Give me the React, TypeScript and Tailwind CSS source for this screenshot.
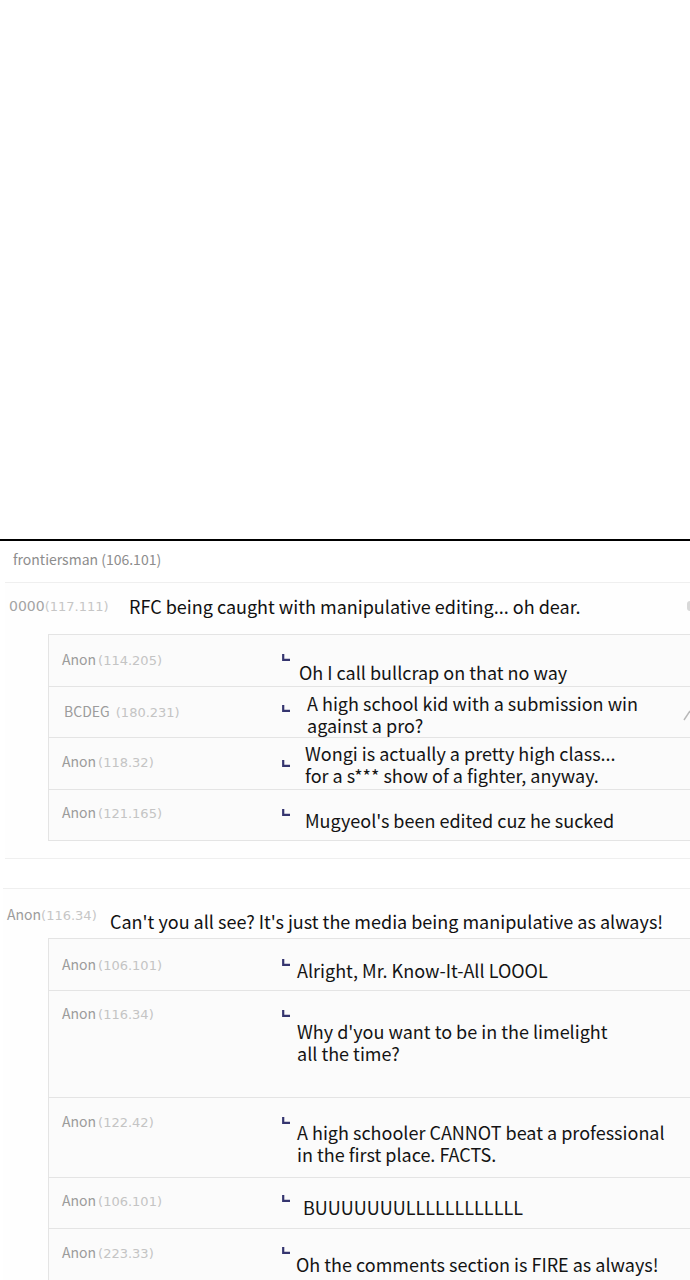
type Reply = {
  name: string;
  ip: string;
  lines: string[];
  height: number;
  textLeft: number;
  textTop: number;
  arrowTop: number;
  nameTop: number;
  nameLeft?: number;
};

const FONT = { fontFamily: '"Noto Sans CJK KR", "Noto Sans", sans-serif' };
const IP_FONT = { fontFamily: '"DejaVu Sans", Verdana, sans-serif' };

function ReplyMark() {
  return (
    <svg width="8" height="7" viewBox="0 0 8 7" className="block">
      <path d="M1.2 0 V5.8 H8" fill="none" stroke="#35356f" strokeWidth="2.2" />
    </svg>
  );
}

function ReplyRow({ r }: { r: Reply }) {
  return (
    <div
      className="relative flex border-b border-[#e4e4e4] bg-[#fbfbfb]"
      style={{ height: r.height }}
    >
      <div className="w-[233px] shrink-0 leading-[20px]" style={{ paddingTop: r.nameTop, paddingLeft: r.nameLeft ?? 13 }}>
        <span className="text-[14px] text-[#9c9c9c]">{r.name}</span>
        <span className="ml-[2px] text-[13px] text-[#c4c4c4]" style={IP_FONT}>
          {r.ip}
        </span>
      </div>
      <div className="w-[8px] shrink-0" style={{ paddingTop: r.arrowTop }}>
        <ReplyMark />
      </div>
      <div style={{ paddingTop: r.textTop, marginLeft: r.textLeft }}>
        {r.lines.map((l) => (
          <div key={l} className="h-[22px] whitespace-nowrap text-[18px] leading-[22px] text-[#141414]">
            {l}
          </div>
        ))}
      </div>
    </div>
  );
}

const thread1: Reply[] = [
  { name: 'Anon', ip: '(114.205)', lines: ['Oh I call bullcrap on that no way'], height: 52, textLeft: 9, textTop: 26, arrowTop: 19, nameTop: 13 },
  { name: 'BCDEG', ip: ' (180.231)', lines: ['A high school kid with a submission win', 'against a pro?'], height: 51, textLeft: 17, textTop: 5, arrowTop: 18, nameTop: 13, nameLeft: 15 },
  { name: 'Anon', ip: '(118.32)', lines: ['Wongi is actually a pretty high class...', 'for a s*** show of a fighter, anyway.'], height: 52, textLeft: 15, textTop: 4, arrowTop: 22, nameTop: 12 },
  { name: 'Anon', ip: '(121.165)', lines: ["Mugyeol's been edited cuz he sucked"], height: 51, textLeft: 15, textTop: 19, arrowTop: 19, nameTop: 11 },
];

const thread2: Reply[] = [
  { name: 'Anon', ip: '(106.101)', lines: ['Alright, Mr. Know-It-All LOOOL'], height: 52, textLeft: 7, textTop: 20, arrowTop: 20, nameTop: 14 },
  { name: 'Anon', ip: '(116.34)', lines: ["Why d'you want to be in the limelight", 'all the time?'], height: 107, textLeft: 7, textTop: 29, arrowTop: 19, nameTop: 11 },
  { name: 'Anon', ip: '(122.42)', lines: ['A high schooler CANNOT beat a professional', 'in the first place. FACTS.'], height: 80, textLeft: 7, textTop: 23, arrowTop: 19, nameTop: 12 },
  { name: 'Anon', ip: '(106.101)', lines: ['BUUUUUUULLLLLLLLLLLL'], height: 51, textLeft: 13, textTop: 18, arrowTop: 17, nameTop: 11 },
  { name: 'Anon', ip: '(223.33)', lines: ['Oh the comments section is FIRE as always!'], height: 60, textLeft: 6, textTop: 24, arrowTop: 18, nameTop: 12 },
];

export default function App() {
  return (
    <div className="relative h-[1280px] w-[690px] overflow-hidden bg-white" style={FONT}>
      <div className="h-[539px]" />
      <div className="h-[2px] bg-black" />

      <div className="h-[41px] pl-[13px] pt-[5px]">
        <span className="text-[14px] leading-[20px] text-[#8d8d8d]">frontiersman (106.101)</span>
      </div>

      {/* first comment and its replies */}
      <div className="ml-[5px] border-t border-b border-[#efefef] bg-[#fefefe] pb-[17px]">
        <div className="relative flex h-[51px]">
          <div className="w-[124px] shrink-0 pl-[4px] pt-[13px] leading-[20px]" style={IP_FONT}>
            <span className="text-[14px] text-[#a4a4a4]">0000</span>
            <span className="text-[13px] text-[#c6c6c6]">(117.111)</span>
          </div>
          <div className="pt-[11px] text-[18px] leading-[24px] whitespace-nowrap text-[#111]">
            RFC being caught with manipulative editing... oh dear.
          </div>
          <div className="absolute right-0 top-[18px] h-[10px] w-[3px] rounded-l-full bg-[#d8d8d8]" />
        </div>
        <div className="ml-[43px] w-[700px] border-t border-l border-[#e4e4e4]">
          {thread1.map((r, i) => (
            <div key={i} className="relative">
              <ReplyRow r={r} />
              {i === 1 && (
                <svg width="8" height="12" viewBox="0 0 8 12" className="absolute left-[634px] top-[22px]">
                  <path d="M1 11 L7 2" stroke="#b8b8b8" strokeWidth="1.5" />
                </svg>
              )}
            </div>
          ))}
        </div>
      </div>

      <div className="h-[29px]" />

      {/* second comment and its replies */}
      <div className="ml-[3px] border-t border-[#efefef] bg-[#fefefe]">
        <div className="flex h-[49px]">
          <div className="w-[107px] shrink-0 pl-[4px] pt-[14px] leading-[20px]">
            <span className="text-[14px] text-[#9c9c9c]">Anon</span>
            <span className="text-[13px] text-[#c6c6c6]" style={IP_FONT}>
              (116.34)
            </span>
          </div>
          <div className="pt-[20px] text-[18px] leading-[24px] whitespace-nowrap text-[#111]">
            Can't you all see? It's just the media being manipulative as always!
          </div>
        </div>
        <div className="ml-[45px] w-[700px] border-t border-l border-[#e4e4e4]">
          {thread2.map((r, i) => (
            <ReplyRow key={i} r={r} />
          ))}
        </div>
      </div>
    </div>
  );
}
